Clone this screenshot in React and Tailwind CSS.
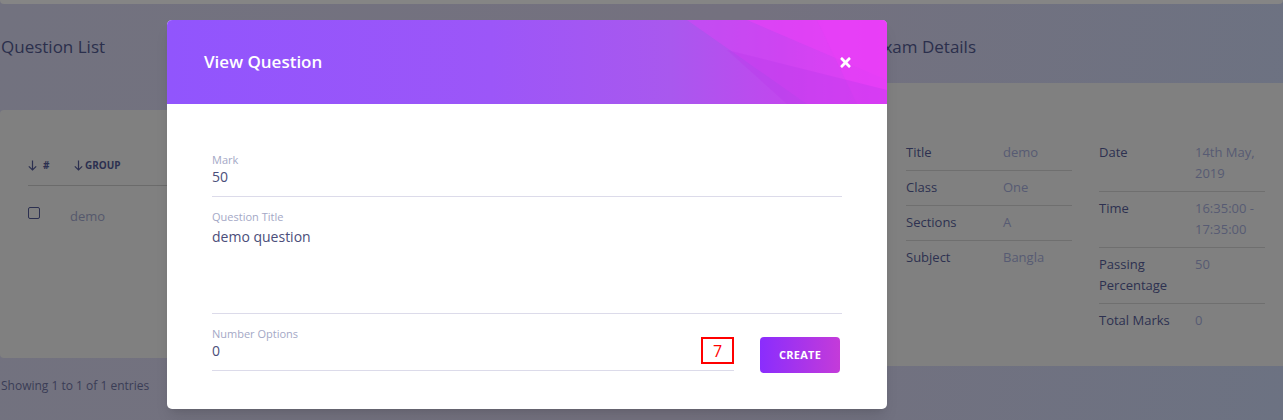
import React from "react";
import { FaTimes } from "react-icons/fa";

const examLeft = [
  ["Title", "demo"],
  ["Class", "One"],
  ["Sections", "A"],
  ["Subject", "Bangla"],
];

const examRight = [
  [["Date"], ["14th May,", "2019"]],
  [["Time"], ["16:35:00 -", "17:35:00"]],
  [["Passing", "Percentage"], ["50"]],
  [["Total Marks"], ["0"]],
];

const Lines = ({ items }) => items.map((t, i) => <div key={i}>{t}</div>);

const SortArrow = () => (
  <svg width="9" height="11" viewBox="0 0 9 11" fill="none" stroke="#2c3050" strokeWidth="1.2" className="mr-[2px] inline-block">
    <path d="M4.5 0.5v9.5M0.8 6.3l3.7 3.7 3.7-3.7" />
  </svg>
);

const Field = ({ label, value, gap, className = "" }) => (
  <div className={`border-b border-[#dcdbea] ${className}`}>
    <div className="text-[11px] leading-[14px] text-[#a4a8c6]">{label}</div>
    <div className={`${gap} text-[14px] leading-[18px] text-[#4b4e7a]`}>{value}</div>
  </div>
);

export default function App() {
  return (
    <div
      className="relative h-[420px] w-[1283px] overflow-hidden bg-[linear-gradient(100deg,#72727f_0%,#74717f_55%,#6c7282_100%)] text-[#2c3050]"
      style={{ fontFamily: "'Open Sans', 'Noto Sans', sans-serif" }}
    >
      {/* page behind the backdrop */}
      <div className="h-[4px] w-full rounded-b bg-[#858585]" />
      <div className="flex">
        {/* Question list */}
        <div className="w-[860px] shrink-0">
          <h3 className="mt-[30px] pl-[1px] text-[17px] leading-[26px] text-[#2b2f4c]">Question List</h3>
          <div className="mt-[50px] h-[248px] rounded bg-[#808080] pl-[28px] pt-[48px]">
            <div className="flex items-center border-b border-[#6b6b6b] pb-[13px] text-[10px] font-bold leading-[14px] text-[#2c3050]">
              <span className="flex w-[46px] items-center">
                <SortArrow />
                <span className="ml-[4px]">#</span>
              </span>
              <span className="flex items-center">
                <SortArrow />
                GROUP
              </span>
            </div>
            <div className="flex items-start pt-[21px]">
              <span className="h-[12px] w-[12px] rounded-[2px] border border-[#2c3050]" />
              <span className="ml-[30px] text-[13px] leading-[18px] text-[#55586c]">demo</span>
            </div>
          </div>
          <div className="mt-[19px] pl-[1px] text-[12px] leading-[17px] text-[#3a3d56]">Showing 1 to 1 of 1 entries</div>
        </div>

        {/* Exam details */}
        <div className="ml-[14px] flex-1">
          <h3 className="mt-[30px] text-[17px] leading-[26px] text-[#2b2f4c]">Exam Details</h3>
          <div className="mt-[23px] flex h-[283px] gap-[27px] bg-[#808080] pl-[32px] pt-[53px] text-[13px] leading-[21px]">
            <div className="w-[166px]">
              {examLeft.map(([k, v], i) => (
                <div
                  key={k}
                  className={`flex pb-[7px] pt-[6px] ${i < examLeft.length - 1 ? "border-b border-[#6f6f6f]" : ""}`}
                >
                  <span className="w-[97px] font-medium text-[#2d3150]">{k}</span>
                  <span className="text-[#575b73]">{v}</span>
                </div>
              ))}
            </div>
            <div className="w-[166px]">
              {examRight.map(([k, v], i) => (
                <div
                  key={i}
                  className={`flex pb-[7px] pt-[6px] ${i < examRight.length - 1 ? "border-b border-[#6f6f6f]" : ""}`}
                >
                  <span className="w-[96px] font-medium text-[#2d3150]">
                    <Lines items={k} />
                  </span>
                  <span className="text-[#575b73]">
                    <Lines items={v} />
                  </span>
                </div>
              ))}
            </div>
          </div>
        </div>
      </div>

      {/* modal */}
      <div className="absolute left-[167px] top-[20px] w-[720px] overflow-hidden rounded-[5px] bg-white shadow-lg">
        <div className="relative flex h-[84px] items-center justify-between overflow-hidden bg-[linear-gradient(90deg,#9155fd_0%,#9c56f8_45%,#a958ee_70%,#c048ee_85%,#e13ef5_100%)] pl-[37px] pr-[34px]">
          <svg className="absolute right-0 top-0 h-[84px] w-[200px]" viewBox="0 0 200 84" preserveAspectRatio="none">
            <polygon points="0,0 200,0 200,84 120,84" fill="#e83ff8" opacity="0.35" />
            <polygon points="60,0 200,0 200,60" fill="#f040f8" opacity="0.45" />
            <polygon points="130,0 200,0 200,84 170,84" fill="#ea3ef8" opacity="0.5" />
            <polygon points="40,30 200,70 200,84 100,84" fill="#b93aea" opacity="0.35" />
          </svg>
          <h4 className="relative text-[17px] font-semibold text-white">View Question</h4>
          <FaTimes className="relative h-[15px] w-[15px] text-white" />
        </div>
        <div className="px-[45px] pb-[36px] pt-[49px]">
          <Field label="Mark" value="50" gap="mt-[1px]" className="pb-[10px]" />
          <Field label="Question Title" value="demo question" gap="mt-[4px]" className="h-[117px] pt-[13px]" />
          <div className="mt-[13px] flex items-start">
            <Field label="Number Options" value="0" gap="mt-[1px]" className="flex-1 pb-[10px]" />
            <div className="relative">
              <div className="absolute -left-[33px] top-[10px] flex h-[27px] w-[33px] items-center justify-center border-2 border-[#ff0000] bg-white text-[16px] text-[#ff0000]">
                7
              </div>
            </div>
            <button className="ml-[26px] mr-[2px] mt-[10px] h-[36px] w-[80px] rounded-[4px] bg-[linear-gradient(90deg,#8a2dfd,#c43bd9)] text-[11px] font-bold tracking-wide text-white">
              CREATE
            </button>
          </div>
        </div>
      </div>
    </div>
  );
}
